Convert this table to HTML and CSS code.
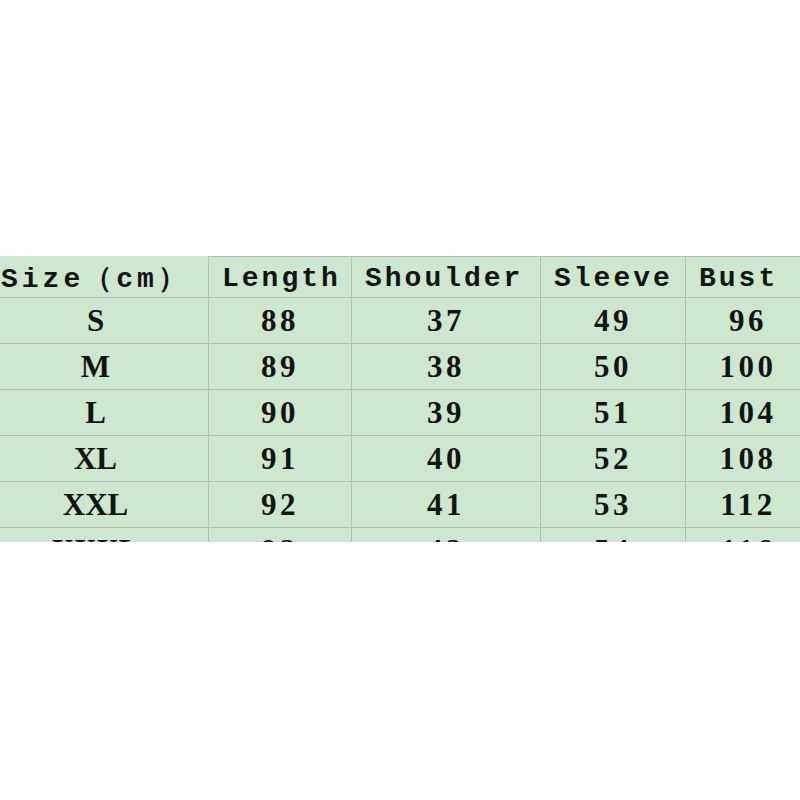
FILE: index.html
```html
<!DOCTYPE html>
<html>
<head>
<meta charset="utf-8">
<link rel="stylesheet" href="styles.css">
</head>
<body>
<div class="sheet">
<table class="size-table">
<colgroup>
<col class="c1"><col class="c2"><col class="c3"><col class="c4"><col class="c5">
</colgroup>
<thead>
<tr>
<th class="first">Size（cm）</th><th>Length</th><th>Shoulder</th><th>Sleeve</th><th>Bust</th>
</tr>
</thead>
<tbody>
<tr><td class="lbl">S</td><td>88</td><td>37</td><td>49</td><td>96</td></tr>
<tr><td class="lbl">M</td><td>89</td><td>38</td><td>50</td><td>100</td></tr>
<tr><td class="lbl">L</td><td>90</td><td>39</td><td>51</td><td>104</td></tr>
<tr><td class="lbl">XL</td><td>91</td><td>40</td><td>52</td><td>108</td></tr>
<tr><td class="lbl">XXL</td><td>92</td><td>41</td><td>53</td><td>112</td></tr>
<tr><td class="lbl">XXXL</td><td>93</td><td>42</td><td>54</td><td>116</td></tr>
</tbody>
</table>
</div>
</body>
</html>
```
FILE: styles.css
```css
html, body {
  margin: 0;
  padding: 0;
  background: #ffffff;
}
.sheet {
  margin-top: 256px;
  height: 286px;
  width: 800px;
  overflow: hidden;
}
.size-table {
  margin-left: -18px;
  width: 828px;
  table-layout: fixed;
  border-collapse: collapse;
  background: #cde8cf;
  color: #141414;
}
.c1 { width: 226px; }
.c2 { width: 143px; }
.c3 { width: 189px; }
.c4 { width: 145px; }
.c5 { width: 125px; }
.size-table th,
.size-table td {
  border: 1px solid #b0c0b0;
  padding: 0;
  white-space: nowrap;
  overflow: hidden;
}
.size-table th {
  height: 34px;
  text-align: left;
  padding-left: 13px;
  font-family: "Liberation Mono", "DejaVu Sans Mono", monospace;
  font-weight: bold;
  font-size: 28px;
  letter-spacing: 3px;
  vertical-align: middle;
  padding-top: 2px;
}
.size-table th.first {
  padding-left: 18px;
  border-top-color: #cde8cf;
  letter-spacing: 4px;
}
.size-table td {
  height: 43px;
  text-align: center;
  font-family: "Liberation Serif", "Times New Roman", serif;
  font-weight: bold;
  font-size: 31px;
  letter-spacing: 3.5px;
  padding-top: 1px;
  padding-bottom: 1px;
}
.size-table td.lbl {
  letter-spacing: 0;
}
```
